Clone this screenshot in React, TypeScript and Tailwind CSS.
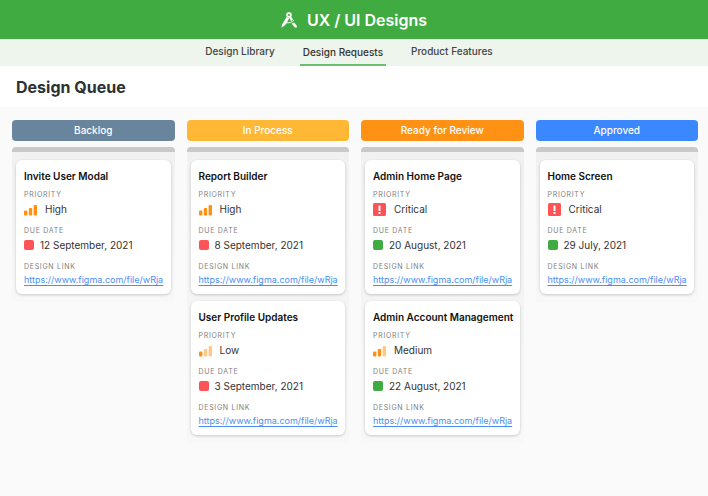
import React from 'react';

type Priority = 'Low' | 'Medium' | 'High' | 'Critical';

interface DesignRequest {
  title: string;
  priority: Priority;
  dueDate: string;
  overdue: boolean;
  link: string;
}

interface QueueColumn {
  name: string;
  color: string;
  requests: DesignRequest[];
}

const FIGMA_LINK = 'https://www.figma.com/file/wRja';

const columns: QueueColumn[] = [
  {
    name: 'Backlog',
    color: 'bg-[#69859d]',
    requests: [
      { title: 'Invite User Modal', priority: 'High', dueDate: '12 September, 2021', overdue: true, link: FIGMA_LINK }
    ]
  },
  {
    name: 'In Process',
    color: 'bg-[#ffb836]',
    requests: [
      { title: 'Report Builder', priority: 'High', dueDate: '8 September, 2021', overdue: true, link: FIGMA_LINK },
      { title: 'User Profile Updates', priority: 'Low', dueDate: '3 September, 2021', overdue: true, link: FIGMA_LINK }
    ]
  },
  {
    name: 'Ready for Review',
    color: 'bg-[#ff9114]',
    requests: [
      { title: 'Admin Home Page', priority: 'Critical', dueDate: '20 August, 2021', overdue: false, link: FIGMA_LINK },
      { title: 'Admin Account Management', priority: 'Medium', dueDate: '22 August, 2021', overdue: false, link: FIGMA_LINK }
    ]
  },
  {
    name: 'Approved',
    color: 'bg-[#3b87fe]',
    requests: [
      { title: 'Home Screen', priority: 'Critical', dueDate: '29 July, 2021', overdue: false, link: FIGMA_LINK }
    ]
  }
];

const navItems = ['Design Library', 'Design Requests', 'Product Features'];

function CompassLogo() {
  return (
    <svg className="w-4 h-4 text-white" viewBox="0 0 16 16" fill="none" stroke="currentColor" aria-hidden="true">
      <rect x="6.2" y="1.1" width="3.6" height="3.8" rx="1.4" strokeWidth={1.9} />
      <path fill="currentColor" stroke="none" d="M5.6 5L8.2 6.4L4.2 13L0.4 15.8L1.2 12.2Z" />
      <path strokeWidth={2.3} d="M9.2 5.2L11 8.4" />
      <path strokeWidth={1} d="M5 10.7C7.8 11.3 10.8 10.4 13 8" />
      <path fill="currentColor" stroke="none" d="M10.6 11.6L13.2 10.4L15.8 13.8L15.6 15.8L13.6 15.2Z" />
    </svg>
  );
}

function PriorityIcon({ priority }: { priority: Priority }) {
  if (priority === 'Critical') {
    return (
      <svg className="w-[13px] h-[13px]" viewBox="0 0 13 13" aria-hidden="true">
        <rect width="13" height="13" rx="1.5" fill="#fc5356" />
        <rect x="5.5" y="2.4" width="2" height="5.6" rx="0.6" fill="#fff" />
        <rect x="5.5" y="9" width="2" height="2" rx="0.6" fill="#fff" />
      </svg>
    );
  }

  const level = priority === 'High' ? 3 : priority === 'Medium' ? 2 : 1;

  return (
    <svg className="w-[13px] h-[13px]" viewBox="0 0 13 13" aria-hidden="true">
      <rect x="0" y="7.5" width="3.4" height="5" rx="1" fill="#ff9114" />
      <rect x="4.8" y="5" width="3.4" height="7.5" rx="1" fill={level > 1 ? '#ff9114' : '#ffc888'} />
      <rect x="9.6" y="2" width="3.4" height="10.5" rx="1" fill={level > 2 ? '#ff9114' : '#ffc888'} />
    </svg>
  );
}

function RequestCard({ request }: { request: DesignRequest }) {
  return (
    <article className="rounded-md bg-white px-2 pt-2 pb-[6px] shadow-[0_1px_3px_rgba(0,0,0,0.2)]">
      <h3 className="text-[10px] leading-4 font-semibold text-[#111] whitespace-nowrap">{request.title}</h3>
      <dl className="mt-[5px] flex flex-col gap-[7px]">
        <div>
          <dt className="text-[7px] leading-[11px] text-[#808080] tracking-widest">PRIORITY</dt>
          <dd className="flex items-center gap-2 text-[10px] leading-[18px] text-[#333]">
            <PriorityIcon priority={request.priority} />
            {request.priority}
          </dd>
        </div>
        <div>
          <dt className="text-[7px] leading-[11px] text-[#808080] tracking-widest">DUE DATE</dt>
          <dd className="flex items-center gap-[6px] text-[10px] leading-[18px] text-[#333] whitespace-nowrap">
            <span className={`w-[10px] h-[10px] rounded-xs ${request.overdue ? 'bg-[#fc5356]' : 'bg-[#40ab41]'}`} />
            {request.dueDate}
          </dd>
        </div>
        <div>
          <dt className="text-[7px] leading-[11px] text-[#808080] tracking-widest">DESIGN LINK</dt>
          <dd className="text-[9px] leading-4">
            <a href={request.link} className="block text-[#4b8ff5] underline underline-offset-2 whitespace-nowrap">
              {request.link}
            </a>
          </dd>
        </div>
      </dl>
    </article>
  );
}

function Column({ column }: { column: QueueColumn }) {
  return (
    <section className="min-w-0">
      <h2 className={`rounded-sm text-center text-[10px] leading-[21px] font-medium text-white ${column.color}`}>
        {column.name}
      </h2>
      <div className="mt-[6px] rounded-t-sm border-t-[5px] border-[#c9c9c9] bg-linear-to-b from-[#f1f1f2] to-[#f8f8f8] px-1 py-2 flex flex-col gap-[7px]">
        {column.requests.map((request) => (
          <RequestCard key={request.title} request={request} />
        ))}
      </div>
    </section>
  );
}

export default function App() {
  return (
    <div className="min-h-screen bg-[#fafafa] font-['Inter',sans-serif]">
      <header className="flex items-center justify-center gap-[10px] h-[39px] bg-[#40ab41] text-white">
        <CompassLogo />
        <span className="text-base font-semibold">UX / UI Designs</span>
      </header>

      <nav className="flex justify-center gap-[22px] h-[27px] pr-[10px] bg-[#edf5ed] text-[10px] leading-6 font-medium text-[#444]">
        {navItems.map((item) => (
          <a
            key={item}
            href="#"
            className={`px-[3px] ${item === 'Design Requests' ? 'border-b-2 border-[#6cc06d] text-[#333] pt-px' : ''}`}
          >
            {item}
          </a>
        ))}
      </nav>

      <div className="bg-white px-4 pt-[9px] pb-2">
        <h1 className="text-base leading-6 font-bold text-[#2d3133]">Design Queue</h1>
      </div>

      <main className="grid grid-cols-4 items-start gap-3 pt-[13px] pl-3 pr-[10px]">
        {columns.map((column) => (
          <Column key={column.name} column={column} />
        ))}
      </main>
    </div>
  );
}
